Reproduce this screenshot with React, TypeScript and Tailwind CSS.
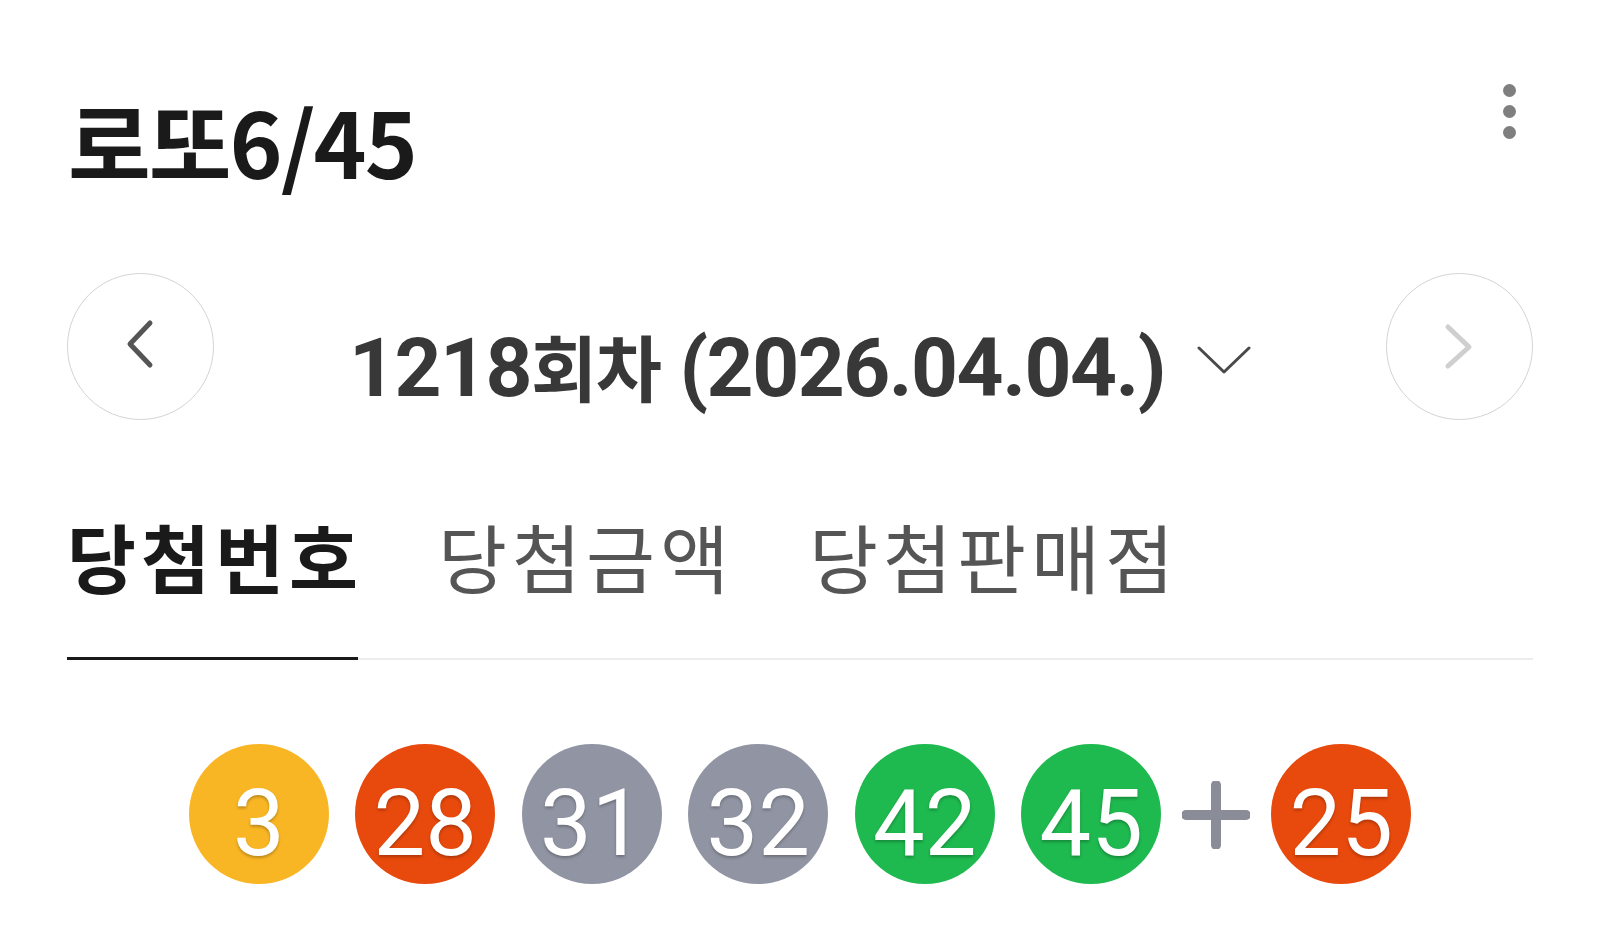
import React from "react";

type Ball = { n: number; color: string };

const balls: Ball[] = [
  { n: 3, color: "bg-[#f9b624]" },
  { n: 28, color: "bg-[#e8490c]" },
  { n: 31, color: "bg-[#9195a3]" },
  { n: 32, color: "bg-[#9195a3]" },
  { n: 42, color: "bg-[#1eb94f]" },
  { n: 45, color: "bg-[#1eb94f]" },
];

function LottoBall({ n, color }: Ball) {
  return (
    <div
      className={`w-[140px] h-[140px] shrink-0 rounded-full ${color} flex items-center justify-center pt-[20px]`}
    >
      <span className="font-['Roboto'] text-[92px] leading-none text-white whitespace-nowrap [text-shadow:0_2px_3px_rgba(0,0,0,0.25)]">
        {n}
      </span>
    </div>
  );
}

function Tab({ label, active }: { label: string; active?: boolean }) {
  return (
    <button
      className={`shrink-0 whitespace-nowrap pt-[18px] pb-[64px] -mb-[2px] border-b-[3px] text-[75px] leading-none ${
        active
          ? "border-[#1a1a1a] font-bold text-[#1a1a1a]"
          : "border-transparent font-normal text-[#555555]"
      }`}
    >
      <span className="inline-block whitespace-nowrap tracking-[5px] -mr-[5px]">{label}</span>
    </button>
  );
}

export default function App() {
  return (
    <div className="w-[1600px] h-[941px] bg-white overflow-hidden font-['Noto_Sans_CJK_KR',sans-serif]">
      <div className="ml-[67px] w-[1466px]">
        {/* Header */}
        <header className="flex justify-between items-start">
          <h1 className="mt-[95px] ml-[1px] text-[90px] leading-none font-bold text-[#1a1a1a] tracking-[-2px] whitespace-nowrap">
            로또6/45
          </h1>
          <div className="mt-[84px] mr-[17px] flex flex-col gap-[8px]">
            <span className="block w-[13px] h-[13px] rounded-full bg-[#7f7f7f]" />
            <span className="block w-[13px] h-[13px] rounded-full bg-[#7f7f7f]" />
            <span className="block w-[13px] h-[13px] rounded-full bg-[#7f7f7f]" />
          </div>
        </header>

        {/* Round navigation */}
        <div className="mt-[88px] h-[147px] flex items-center justify-between">
          <button className="w-[147px] h-[147px] shrink-0 rounded-full border border-[#d4d4d4] flex items-center justify-center bg-white">
            <svg width="40" height="60" viewBox="0 0 40 60" fill="none" className="-mt-[5px] -ml-[2px]">
              <path
                d="M30 9 L10 30 L30 51"
                stroke="#555555"
                strokeWidth="5"
                strokeLinecap="round"
                strokeLinejoin="round"
              />
            </svg>
          </button>
          <div className="flex items-center gap-[32px]">
            <span className="mt-[43px] whitespace-nowrap font-['Roboto','Noto_Sans_CJK_KR',sans-serif] font-bold text-[82px] leading-none text-[#383838] tracking-[-1.5px]">
              1218<span className="font-['Noto_Sans_CJK_KR',sans-serif] text-[72px]">회차</span> (2026.04.04.)
            </span>
            <svg width="54" height="30" viewBox="0 0 54 30" fill="none" className="mt-[27px] shrink-0">
              <path
                d="M2 3 L27 27 L52 3"
                stroke="#4a4a4a"
                strokeWidth="3"
                strokeLinecap="round"
                strokeLinejoin="round"
              />
            </svg>
          </div>
          <button className="w-[147px] h-[147px] shrink-0 rounded-full border border-[#d4d4d4] flex items-center justify-center bg-white">
            <svg width="40" height="60" viewBox="0 0 40 60" fill="none" className="-ml-[2px]">
              <path
                d="M10 10 L31 30 L10 49"
                stroke="#cfcfcf"
                strokeWidth="5"
                strokeLinecap="round"
                strokeLinejoin="round"
              />
            </svg>
          </button>
        </div>

        {/* Tabs */}
        <div className="mt-[80px] flex gap-[80px] border-b-[2px] border-[#ececec]">
          <Tab label="당첨번호" active />
          <Tab label="당첨금액" />
          <Tab label="당첨판매점" />
        </div>

        {/* Balls */}
        <div className="mt-[84px] flex items-center justify-center gap-[26.5px]">
          {balls.map((b) => (
            <LottoBall key={b.n} {...b} />
          ))}
          <div className="w-[57px] h-[140px] shrink-0 flex items-center justify-center">
            <svg width="68" height="68" viewBox="0 0 68 68" className="shrink-0 mt-[2px]" fill="none">
              <path
                d="M34 4 L34 64 M4 34 L64 34"
                stroke="#8a8c97"
                strokeWidth="10"
                strokeLinecap="round"
              />
            </svg>
          </div>
          <LottoBall n={25} color="bg-[#e8490c]" />
        </div>
      </div>
    </div>
  );
}
